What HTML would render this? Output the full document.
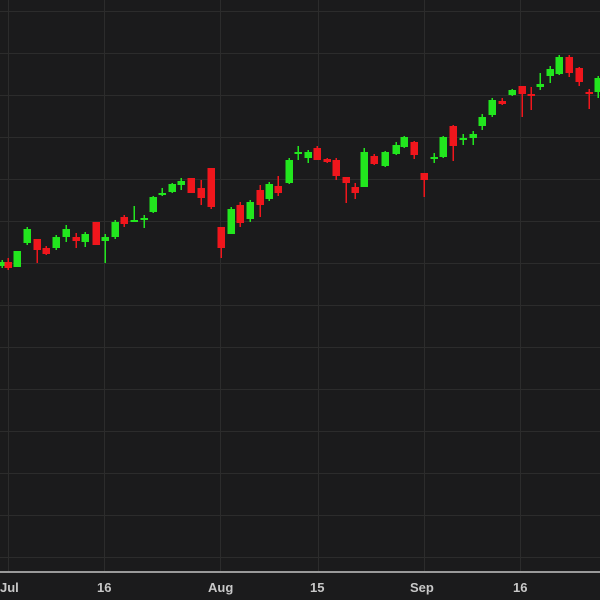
<!DOCTYPE html>
<html><head><style>
html,body{margin:0;padding:0;background:#1b1b1c;}
svg{display:block}
text{font-family:"Liberation Sans",sans-serif;font-size:13px;font-weight:bold;fill:#c8c8c8}
</style></head><body>
<svg width="600" height="600" viewBox="0 0 600 600">
<rect width="600" height="600" fill="#1b1b1c"/>
<g stroke="#2c2c2c" stroke-width="1">
<line x1="0" y1="11.5" x2="600" y2="11.5"/><line x1="0" y1="53.5" x2="600" y2="53.5"/>
<line x1="0" y1="95.5" x2="600" y2="95.5"/><line x1="0" y1="137.5" x2="600" y2="137.5"/>
<line x1="0" y1="179.5" x2="600" y2="179.5"/><line x1="0" y1="221.5" x2="600" y2="221.5"/>
<line x1="0" y1="263.5" x2="600" y2="263.5"/><line x1="0" y1="305.5" x2="600" y2="305.5"/>
<line x1="0" y1="347.5" x2="600" y2="347.5"/><line x1="0" y1="389.5" x2="600" y2="389.5"/>
<line x1="0" y1="431.5" x2="600" y2="431.5"/><line x1="0" y1="473.5" x2="600" y2="473.5"/>
<line x1="0" y1="515.5" x2="600" y2="515.5"/><line x1="0" y1="557.5" x2="600" y2="557.5"/>
<line x1="8.5" y1="0" x2="8.5" y2="572"/><line x1="104.5" y1="0" x2="104.5" y2="572"/>
<line x1="220.5" y1="0" x2="220.5" y2="572"/><line x1="318.5" y1="0" x2="318.5" y2="572"/>
<line x1="424.5" y1="0" x2="424.5" y2="572"/><line x1="520.5" y1="0" x2="520.5" y2="572"/>
</g>
<rect x="0" y="571" width="600" height="2" fill="#9a9a9a"/>
<g id="c"></g>
<text x="0" y="592">Jul</text>
<text x="97" y="592">16</text>
<text x="208" y="592">Aug</text>
<text x="310" y="592">15</text>
<text x="410" y="592">Sep</text>
<text x="513" y="592">16</text>
</svg>
<script>
var d=[
[2,'g',262,266,260,268],[8,'r',262,268,258,270],[17,'g',251,267,251,267],[27,'g',229,243,227,245],
[37,'r',239,250,239,263],[46,'r',248,254,246,255],[56,'g',237,248,235,250],[66,'g',229,237,225,242],
[76,'r',237,241,233,248],[85,'g',234,242,232,247],[96,'r',222,245,222,245],[105,'g',237,241,234,263],
[115,'g',222,237,220,239],[124,'r',217,224,215,227],[134,'g',220,221,206,222],[144,'g',218,220,215,228],
[153,'g',197,212,196,213],[162,'g',193,195,188,196],[172,'g',184,192,183,193],[181,'g',181,185,178,190],
[191,'r',178,193,178,193],[201,'r',188,198,180,205],[211,'r',168,207,168,209],
[221,'r',227,248,227,258],[231,'g',209,234,207,234],[240,'r',205,223,202,227],[250,'g',202,219,200,222],
[260,'r',190,205,185,217],[269,'g',184,199,182,201],[278,'r',186,193,176,196],[289,'g',160,183,158,184],
[298,'g',152,154,146,160],[308,'g',152,158,150,163],[317,'r',148,160,146,160],[327,'r',159,162,158,163],
[336,'r',160,176,158,180],[346,'r',177,183,177,203],[355,'r',187,193,183,199],[364,'g',152,187,148,187],
[374,'r',156,164,154,165],[385,'g',152,166,151,167],[396,'g',145,154,142,155],[404,'g',137,147,136,148],
[414,'r',142,155,141,159],[424,'r',173,180,173,197],[434,'g',157,159,153,163],[443,'g',137,157,136,158],
[453,'r',126,146,125,161],[463,'g',138,140,134,145],[473,'g',134,138,131,145],[482,'g',117,126,114,130],
[492,'g',100,115,98,117],[502,'r',101,104,98,105],[512,'g',90,95,89,96],[522,'r',86,94,86,117],
[531,'r',94,96,87,110],[540,'g',84,87,73,90],[550,'g',69,76,66,83],[559,'g',57,74,55,75],
[569,'r',57,73,55,77],[579,'r',68,82,67,86],[589,'r',92,94,89,109],[598,'g',78,92,76,98]];
var s='';
d.forEach(function(c){var col=c[1]=='g'?'#22e61e':'#f0161c';
s+='<rect x="'+(c[0]-0.5)+'" y="'+c[4]+'" width="1.5" height="'+(c[5]-c[4])+'" fill="'+col+'"/>';
s+='<rect x="'+(c[0]-3.5)+'" y="'+c[2]+'" width="7.5" height="'+Math.max(2,c[3]-c[2])+'" fill="'+col+'"/>';});
document.getElementById('c').innerHTML=s;
</script>
</body></html>
